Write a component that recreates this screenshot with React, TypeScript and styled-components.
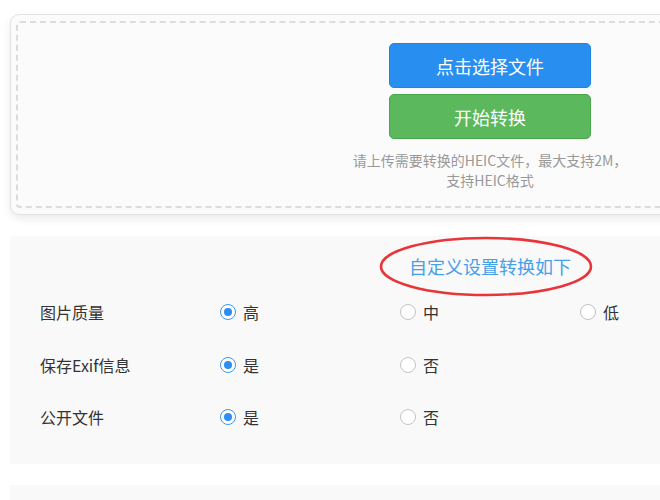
import React from "react";
import styled, { createGlobalStyle } from "styled-components";

const Global = createGlobalStyle`
  html, body { margin: 0; padding: 0; background: #fff; overflow: hidden; }
  body { font-family: "Noto Sans CJK SC", "Liberation Sans", sans-serif; color: #333; }
  * { box-sizing: border-box; }
`;

const Page = styled.div`
  width: 980px;
  padding: 14px 10px 0;
`;

const UploadCard = styled.div`
  background: #fbfbfb;
  border: 1px solid #e2e2e2;
  border-radius: 9px;
  padding: 6px 5px;
  box-shadow: 0 4px 8px rgba(0, 0, 0, 0.08);
`;

const DropZone = styled.div`
  border: 2px dashed #dcdcdc;
  border-radius: 4px;
  padding: 20px 0 16px;
  display: flex;
  flex-direction: column;
  align-items: center;
  gap: 6px;
`;

const Button = styled.button<{ $variant: "primary" | "success" }>`
  width: 202px;
  height: 45px;
  border-radius: 5px;
  border: 1px solid ${(p) => (p.$variant === "primary" ? "#1f84e6" : "#4aa64a")};
  background: ${(p) => (p.$variant === "primary" ? "#288ff0" : "#5cb85c")};
  color: #fff;
  font-family: inherit;
  font-size: 18px;
  line-height: 24px;
  padding: 0;
  cursor: pointer;
`;

const Hint = styled.p`
  margin: 5px 0 0;
  text-align: center;
  font-size: 14px;
  line-height: 20px;
  color: #999;
`;

const Settings = styled.div`
  position: relative;
  margin-top: 21px;
  background: #f9f9f9;
  padding: 18px 30px 20px;
`;

const Title = styled.div`
  text-align: center;
  font-size: 18px;
  line-height: 24px;
  color: #46a0e8;
  margin-bottom: 8px;
`;

const Ellipse = styled.svg`
  position: absolute;
  left: 369px;
  top: 0px;
  width: 214px;
  height: 62px;
  pointer-events: none;
`;

const Row = styled.div`
  display: grid;
  grid-template-columns: 180px 180px 180px 180px;
  align-items: center;
  height: 52.5px;
  font-size: 16px;
`;

const Label = styled.div`
  color: #333;
  line-height: 22px;
`;

const Option = styled.label`
  display: flex;
  align-items: center;
  gap: 7px;
  color: #333;
  line-height: 22px;
`;

const RadioCircle = styled.span<{ $checked: boolean }>`
  width: 16px;
  height: 16px;
  border-radius: 50%;
  background: #fff;
  border: 1px solid ${(p) => (p.$checked ? "#3d97ee" : "#c4c4c4")};
  display: flex;
  align-items: center;
  justify-content: center;
  flex: none;
  &::after {
    content: "";
    display: ${(p) => (p.$checked ? "block" : "none")};
    width: 8px;
    height: 8px;
    border-radius: 50%;
    background: #2c8ef0;
  }
`;

const NextPanel = styled.div`
  margin-top: 21px;
  height: 60px;
  background: #f9f9f9;
`;

const rows = [
  { label: "图片质量", options: ["高", "中", "低"] },
  { label: "保存Exif信息", options: ["是", "否"] },
  { label: "公开文件", options: ["是", "否"] },
];

export default function App() {
  return (
    <>
      <Global />
      <Page>
        <UploadCard>
          <DropZone>
            <Button $variant="primary">点击选择文件</Button>
            <Button $variant="success">开始转换</Button>
            <Hint>
              请上传需要转换的HEIC文件，最大支持2M，
              <br />
              支持HEIC格式
            </Hint>
          </DropZone>
        </UploadCard>
        <Settings>
          <Ellipse viewBox="0 0 214 62">
            <ellipse cx="107" cy="30.5" rx="105" ry="28.5" fill="none" stroke="#e8353a" strokeWidth="2.6" />
          </Ellipse>
          <Title>自定义设置转换如下</Title>
          {rows.map((r) => (
            <Row key={r.label}>
              <Label>{r.label}</Label>
              {r.options.map((o, i) => (
                <Option key={o}>
                  <RadioCircle $checked={i === 0} />
                  {o}
                </Option>
              ))}
            </Row>
          ))}
        </Settings>
        <NextPanel />
      </Page>
    </>
  );
}
